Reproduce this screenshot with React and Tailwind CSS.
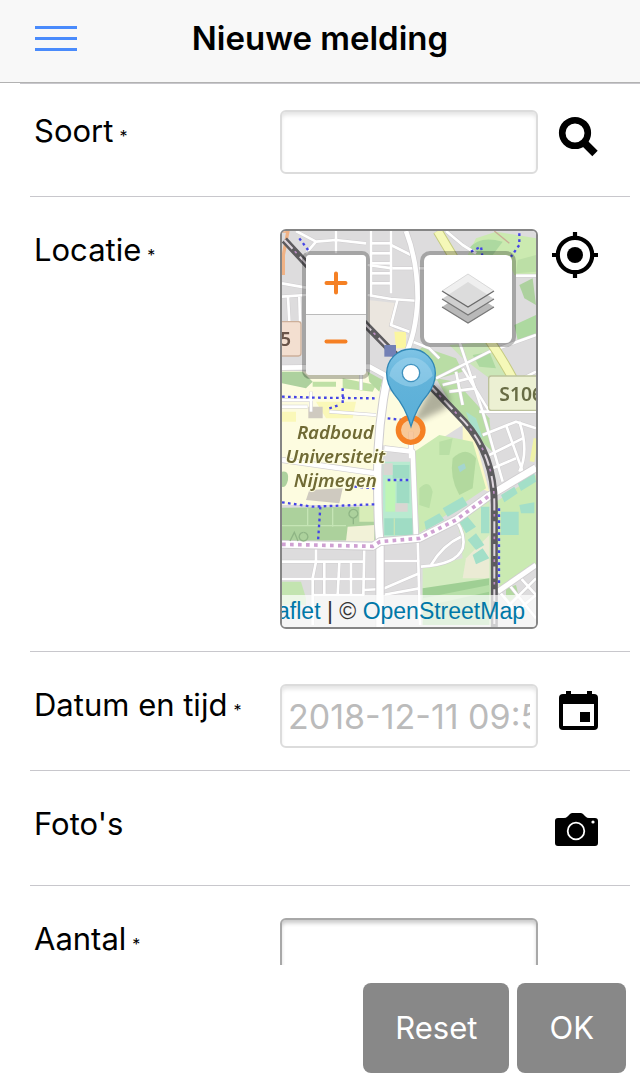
import { useState } from "react";

const ROAD = "#ffffff";
const CASING = "#cfcdcf";

// thin white streets between the houses
const streets = [
  "M18 175 L90 188",
  "M18 215 L90 210",
  "M36 215 L40 290",
  "M70 215 L72 290",
  "M60 18 L120 50 L180 45 L270 55",
  "M120 50 L90 85",
  "M180 18 V85",
  "M285 18 V210",
  "M285 55 H345",
  "M285 85 H345",
  "M285 115 H345",
  "M285 145 H345",
  "M285 175 H345",
  "M345 18 V205",
  "M345 60 L405 90",
  "M350 130 H415",
  "M275 210 L345 222 L430 228",
  "M365 222 L345 300 L400 320",
  "M275 120 L350 130",
  "M430 130 L445 130",
  "M510 18 L560 60 L600 85",
  "M720 152 H780",
  "M550 350 L620 560 L680 770",
  "M410 350 L460 370 L490 400",
  "M480 460 L540 430 L640 380 L780 330",
  "M500 480 L600 455",
  "M520 500 L600 490",
  "M540 440 L560 540",
  "M560 430 L640 560",
  "M700 480 L780 440",
  "M610 560 L780 560",
  "M620 630 L720 590 L780 610",
  "M640 690 L740 640",
  "M690 600 L740 740",
  "M730 590 Q760 680 730 740",
  "M650 730 L720 700",
  "M120 965 V1010 L110 1060 V1200",
  "M18 1010 H265",
  "M18 1062 H310",
  "M145 1012 V1110",
  "M190 1012 L185 1110",
  "M225 1012 V1110",
  "M110 1110 H265",
  "M265 965 L262 1110",
  "M425 940 L432 1200",
  "M315 1008 H430",
  "M262 1095 L320 1092 L430 1045",
  "M320 1110 L430 1090",
  "M435 1025 Q540 1020 560 970 Q570 930 540 885",
  "M465 1020 Q500 960 555 935",
  "M670 1100 L720 1160 L780 1110",
  "M700 1080 L780 1180",
  "M730 1055 L780 1110",
  "M690 1150 L780 1060",
  "M18 525 H110 M18 545 H95",
  "M105 500 V560",
  "M160 560 L300 570",
  "M255 450 V495",
];

const dottedPaths = [
  "M70 40 L100 80",
  "M18 515 L120 518 L300 520",
  "M200 490 V535",
  "M160 550 L190 540",
  "M335 580 L380 585",
  "M585 80 L615 65 L620 100",
  "M730 25 V60 L705 95",
  "M18 832 L110 845 L295 838",
  "M133 845 L126 950",
  "M335 765 H405",
  "M235 785 L295 790",
  "M669 850 V1080",
];

function MapTiles() {
  return (
    <svg
      className="block h-full w-full"
      viewBox="18 18 762 1188"
      preserveAspectRatio="xMidYMid slice"
      aria-hidden="true"
    >
      <defs>
        <linearGradient id="pin" x1="0" y1="0" x2="0" y2="1">
          <stop offset="0" stopColor="#7fc4e6" />
          <stop offset="0.4" stopColor="#62b3da" />
          <stop offset="1" stopColor="#5aafd8" />
        </linearGradient>
        <filter id="soft" x="-50%" y="-50%" width="200%" height="200%">
          <feGaussianBlur stdDeviation="10" />
        </filter>
        <filter id="tile">
          <feGaussianBlur stdDeviation="2" />
        </filter>
      </defs>

      <g filter="url(#tile)">
        <rect width="800" height="1230" fill="#dddcdd" />

        {/* land use */}
        <path d="M275 225 L365 235 L350 310 L395 330 L380 400 L275 300Z" fill="#ebe6df" />
        <path d="M355 320 H390 V370 H360Z" fill="#fbf6a0" />
        <path d="M18 435 L100 440 L250 425 L320 470 L305 840 H18Z" fill="#fdfce0" />
        <path d="M120 530 H240 L230 580 H150Z M18 560 H60 V590 H18Z" fill="#faf8b8" />
        <path d="M18 440 L80 440 L110 470 L90 490 L18 475Z" fill="#add19e" />
        <path d="M110 470 H180 V485 H110Z M200 460 L300 480 L290 500 L200 490Z" fill="#bfe0a5" />
        <path d="M275 440 L320 465 L310 500 L280 470Z" fill="#b5d9a0" />
        <path d="M18 740 Q40 735 36 765 Q30 790 18 785Z" fill="#add19e" />
        <path d="M97 545 H140 V580 H97Z M100 795 L200 790 L190 835 L90 825Z" fill="#cfcac0" />
        <path d="M330 500 L470 490 L560 600 L420 690 L320 660Z" fill="#fdfce0" />
        <path d="M560 600 L600 650 L640 800 L610 790 L560 650Z" fill="#fbf8c8" />
        <path d="M400 400 L440 365 L540 400 L560 440 L490 460 L460 480Z" fill="#b9dda5" />
        <path d="M480 460 L540 470 L640 580 L650 680 L560 600Z" fill="#b9dda5" />
        <path d="M570 560 L600 580 L620 640 L590 620Z" fill="#aae0cb" />
        <path d="M570 100 L600 40 L660 20 L780 40 V155 L715 150 L690 95Z" fill="#cbeab0" />
        <path d="M580 70 Q610 30 680 50 L650 90 L600 88Z" fill="#add9a0" />
        <path d="M725 105 L780 90 V140 L720 145Z" fill="#bcdfa6" />
        <path d="M730 180 L770 160 L780 240 L745 220Z" fill="#add19e" />
        <path d="M520 360 L640 350 L700 460 L640 460 L560 400Z" fill="#cbe6b8" />
        <path d="M590 390 L640 380 L660 430 L610 425Z M715 300 L780 270 V330 L725 345Z" fill="#add9a0" />
        <path d="M415 680 L490 630 L590 650 L630 790 L540 850 L430 925Z" fill="#caeab2" />
        <path d="M530 700 Q570 660 600 700 L590 790 L550 810 Q520 760 530 700Z" fill="#b2d99e" />
        <path d="M430 790 Q460 760 470 800 L460 850 L430 840Z M490 650 L530 640 L520 690 L490 690Z" fill="#b9dfa5" />
        <path d="M545 725 L565 715 L570 730 L552 742Z" fill="#a5d5d0" />
        <path d="M320 710 H410 L415 935 L322 935Z" fill="#b8ead0" />
        <path d="M350 720 H400 V760 H350Z M362 768 H400 V835 H362Z M325 880 H410 V930 H325Z" fill="#9fdcc4" />
        <path d="M328 765 H358 V860 H328Z" fill="#bff5b5" />
        <path d="M322 715 H350 V750 H322Z M358 835 H395 V860 H358Z" fill="#d9d6d2" />
        <path d="M18 848 L300 845 V945 L18 948Z" fill="#acd19c" />
        <path d="M250 845 L300 840 V890 H250Z" fill="#d8edb8" />
        <path d="M215 905 L295 900 V948 H210Z" fill="#f2f2d8" />
        <path d="M440 1030 L560 1000 L545 890 L640 820 L655 1200 H440Z" fill="#d3ecc0" />
        <path d="M570 1000 L640 930 V1060 L560 1060Z" fill="#ebebd4" />
        <path d="M432 945 L535 900 L560 940 L545 1000 L432 1020Z" fill="#dddcdd" />
        <path d="M440 1090 L640 1060 V1200 H440Z" fill="#9fcf94" />
        <path d="M440 1120 L640 1080 V1100 L440 1145Z" fill="#b7dfa8" />
        <path d="M18 1070 H75 L90 1120 V1140 H18Z" fill="#c3e4b0" />
        <path d="M660 830 L780 750 V1030 L670 1095Z" fill="#caeab2" />
        <path d="M690 1090 L720 1080 L730 1120 L690 1130Z" fill="#b3d9a0" />
        <path
          d="M500 850 L560 815 L575 840 L515 875Z M445 890 L490 865 L505 885 L450 915Z M550 890 L575 875 L600 905 L570 925Z M575 945 L600 925 L625 960 L600 975Z M590 990 L620 970 L640 1000 L600 1018Z M615 845 H640 V925 H615Z M675 860 H728 V930 H675Z M675 810 L715 785 L725 805 L685 832Z M725 775 L775 745 L780 770 L735 798Z M730 840 L775 832 V865 H735Z"
          fill="#a3dfc8"
        />

        {/* plots in the park */}
        <path d="M95 850 V900 M170 850 V905 M18 902 H210 M355 880 V930" stroke="#c5e5b5" strokeWidth="4" fill="none" />

        {/* streets */}
        {streets.map((d) => (
          <path key={`c${d}`} d={d} stroke={CASING} strokeWidth="11" fill="none" />
        ))}
        {streets.map((d) => (
          <path key={d} d={d} stroke={ROAD} strokeWidth="8" fill="none" strokeLinejoin="round" />
        ))}

        {/* main roads */}
        <g fill="none" strokeLinejoin="round">
          <path d="M390 18 Q425 110 425 220 Q420 330 385 395 M18 428 L280 425 L335 455 M18 705 L300 745 M325 670 L410 680 L420 940 M405 620 V700" stroke={CASING} strokeWidth="18" />
          <path d="M335 450 Q305 600 305 740 Q305 900 312 950 V1210" stroke={CASING} strokeWidth="28" />
          <path d="M390 18 Q425 110 425 220 Q420 330 385 395 M18 428 L280 425 L335 455 M18 705 L300 745 M325 670 L410 680 L420 940 M405 620 V700" stroke={ROAD} strokeWidth="14" />
          <path d="M335 450 Q305 600 305 740 Q305 900 312 950 V1210" stroke={ROAD} strokeWidth="22" />
          <path d="M385 400 L345 440" stroke={ROAD} strokeWidth="20" />
          <path d="M485 18 L540 110 L640 345 Q690 420 715 470" stroke="#c5cb80" strokeWidth="30" />
          <path d="M485 18 L540 110 L640 345 Q690 420 715 470" stroke="#f5f8b8" strokeWidth="24" />
          <path d="M780 640 L768 710" stroke="#eff2a8" strokeWidth="14" />
          <path d="M665 1100 L780 1020" stroke={CASING} strokeWidth="20" />
          <path d="M665 1100 L780 1020" stroke={ROAD} strokeWidth="15" />
          <path d="M18 958 L290 964 L312 950 L430 940 L540 885 L640 812 L780 728" stroke={CASING} strokeWidth="26" />
          <path d="M18 958 L290 964 L312 950 L430 940 L540 885 L640 812 L780 728" stroke={ROAD} strokeWidth="21" />
          <path d="M18 958 L290 964 L312 950 L430 940 L540 885 L640 812" stroke="#cfa0d2" strokeWidth="11" strokeDasharray="11 13" />
          <path d="M18 18 H36 L22 90 V150" stroke="#f0b285" strokeWidth="10" />
          <path d="M655 18 L700 55" stroke="#c9ad95" strokeWidth="4" />
        </g>

        {/* railway */}
        <g fill="none">
          <path d="M25 45 L90 115 L270 300 L340 372 L470 490 L565 590 Q655 690 655 840 V1210" stroke="#5d5b5f" strokeWidth="21" />
          <path d="M25 45 L90 115 L270 300 L340 372 L470 490 L565 590 Q655 690 655 840 V1210" stroke="#ddd5dd" strokeWidth="6" strokeDasharray="36 32" />
          <path d="M25 45 L90 115 L270 300 L340 372 L470 490 L565 590 Q655 690 655 840 V1210" stroke="#bd8fc4" strokeWidth="5" strokeDasharray="8 60" strokeDashoffset="-46" />
        </g>
        <rect x="325" y="360" width="35" height="35" fill="#7380b5" />

        {dottedPaths.map((d) => (
          <path key={d} d={d} stroke="#4545e6" strokeWidth="7" strokeDasharray="8 10" fill="none" />
        ))}

        {/* tree marks */}
        <g fill="none" stroke="#8fb585" strokeWidth="4">
          <path d="M232 898 V880 Q212 872 222 858 Q232 848 243 858 Q252 872 232 880" />
          <path d="M42 948 L55 922 L66 948 M82 922 a13 13 0 1 0 1 0" />
        </g>

        {/* road numbers */}
        <rect x="-60" y="290" width="135" height="103" rx="8" fill="#f3dfd0" stroke="#cdb09a" strokeWidth="4" />
        <rect x="638" y="453" width="180" height="103" rx="8" fill="#ecf0d3" stroke="#bcc29c" strokeWidth="4" />
        <g fontFamily="'Noto Sans', sans-serif" fontSize="58" fontWeight="600">
          <text x="12" y="362" fill="#6b5548">5</text>
          <text x="670" y="528" fill="#686c45">S106</text>
        </g>

        <g
          fontFamily="'Noto Sans', sans-serif"
          fontSize="56"
          fontStyle="italic"
          fontWeight="600"
          textAnchor="middle"
          fill="#6f6a35"
          stroke="#fdfce0"
          strokeWidth="6"
          paintOrder="stroke"
        >
          <text x="178" y="641">Radboud</text>
          <text x="178" y="713">Universiteit</text>
          <text x="178" y="785">Nijmegen</text>
        </g>
      </g>

      {/* position and marker */}
      <path d="M405 600 L470 480 Q540 500 510 550 Z" fill="#000" opacity="0.3" filter="url(#soft)" />
      <circle cx="404" cy="615" r="37" fill="#f5b77f" fillOpacity="0.75" stroke="#f58024" strokeWidth="16" />
      <path
        d="M405 604 Q388 545 355 508 Q332 478 332 445 A73 73 0 0 1 478 445 Q478 478 455 508 Q422 545 405 604Z"
        fill="url(#pin)"
        stroke="#2f86b5"
        strokeWidth="4"
      />
      <path d="M340 452 A66 66 0 0 1 470 452 Q437 485 405 485 Q373 485 340 452Z" fill="#a3d6ee" opacity="0.55" />
      <circle cx="405" cy="444" r="26" fill="#fff" stroke="#3f92bf" strokeWidth="4" />
    </svg>
  );
}

function LayersIcon() {
  return (
    <svg className="h-[52px] w-[54px]" viewBox="0 0 54 52" aria-hidden="true">
      <path d="M1 34 L27 17 L53 34 L27 50Z" fill="#b9b9b9" />
      <path d="M1 34 L27 50 L53 34" fill="none" stroke="#777" strokeWidth="1.2" />
      <path d="M1 26 L27 9 L53 26 L27 42Z" fill="#cfcfcf" />
      <path d="M1 26 L27 42 L53 26" fill="none" stroke="#777" strokeWidth="1.2" />
      <path d="M1 18 L27 1 L53 18 L27 34Z" fill="#efefef" />
      <path d="M7 22 L27 9 L47 22 L27 34Z" fill="#dcdcdc" />
      <path d="M1 18 L27 34 L53 18" fill="none" stroke="#6a6a6a" strokeWidth="1.4" />
      <path d="M1 18 L27 1 L53 18" fill="none" stroke="#c4c4c4" strokeWidth="0.6" />
    </svg>
  );
}

function SearchIcon() {
  return (
    <svg className="h-full w-full" viewBox="0 0 46 46" fill="none" stroke="#000">
      <circle cx="23" cy="20" r="12.8" strokeWidth="6.6" />
      <path d="M31 28.5 L43 40.5" strokeWidth="7.6" />
    </svg>
  );
}

function LocateIcon() {
  return (
    <svg className="h-full w-full" viewBox="0 0 46 46" fill="none" stroke="#000" strokeWidth="4.2">
      <circle cx="23" cy="23" r="17.2" />
      <circle cx="23" cy="23" r="8" fill="#000" stroke="none" />
      <path d="M23 0 V5 M23 41 V46 M0 23 H5 M41 23 H46" />
    </svg>
  );
}

function CalendarIcon() {
  return (
    <svg className="h-full w-full" viewBox="0 0 46 46">
      <rect x="7" y="7" width="39" height="36" rx="4" />
      <rect x="11" y="17" width="31" height="22" fill="#fff" />
      <path d="M14 4 H19 V9 H14Z M35 4 H40 V9 H35Z M28 25 H38 V35 H28Z" />
    </svg>
  );
}

function CameraIcon() {
  return (
    <svg className="h-full w-full" viewBox="0 0 46 46">
      <path d="M6 12 H12 Q14 12 15.5 10.5 L18 8 Q19 7 20.5 7 H28.5 Q30 7 31 8 L33.5 10.5 Q35 12 37 12 H43 Q46 12 46 15 V37 Q46 40 43 40 H6 Q3 40 3 37 V15 Q3 12 6 12Z" />
      <circle cx="24" cy="25" r="8.3" fill="none" stroke="#fff" strokeWidth="1.8" />
      <circle cx="41" cy="16" r="1.6" fill="#fff" />
    </svg>
  );
}

function Row({ id, buttonId, label, required, icon, iconLabel, first, children }) {
  return (
    <div
      className={`ml-[30px] mr-[10px] flex items-start border-b border-[#c8c7cc] pb-[22px] ${
        first ? "pt-[26px]" : "pt-8"
      }`}
    >
      <label htmlFor={id || buttonId} className="w-[250px] shrink-0 pl-1 text-[31px] leading-[42px]">
        {label}
        {required && <span className="pl-[6px] text-base leading-none">*</span>}
      </label>
      <div className="min-h-[60px] min-w-0 flex-1">{children}</div>
      <div className="w-[92px] shrink-0 pl-[14px] pt-[3px]">
        {icon && (
          <button id={buttonId} type="button" aria-label={iconLabel} className="block size-[46px]">
            {icon}
          </button>
        )}
      </div>
    </div>
  );
}

const field =
  "block h-16 w-full rounded-md border-2 bg-white px-[6px] text-[34px] outline-none placeholder:text-[#bbb]";
const light = "border-[#dcdcdc] shadow-[inset_0_4px_4px_-1px_#e4e4e4]";
const dark = "border-[#a8a8a8] shadow-[inset_0_4px_4px_-1px_#c8c8c8]";

function App() {
  const [soort, setSoort] = useState("");
  const [aantal, setAantal] = useState("");

  function reset() {
    setSoort("");
    setAantal("");
  }

  return (
    <div className="flex h-screen flex-col bg-white font-['Inter','Liberation_Sans',sans-serif] text-black">
      <header className="grid h-[83px] shrink-0 grid-cols-[112px_1fr_112px] items-center border-b border-[#b2b2b2] bg-[#f8f8f8] pb-[6px]">
        <button type="button" aria-label="Menu" className="ml-[35px] flex w-[42px] flex-col gap-2">
          <span className="h-[3px] bg-[#4a8bfc]" />
          <span className="h-[3px] bg-[#4a8bfc]" />
          <span className="h-[3px] bg-[#4a8bfc]" />
        </button>
        <h1 className="text-center text-[33px] font-semibold leading-10">Nieuwe melding</h1>
      </header>

      <main className="min-h-0 flex-1 overflow-y-auto [scrollbar-width:none]">
        <div className="ml-5 border-t border-[#c8c7cc]" />
        <Row id="soort" label="Soort" required first icon={<SearchIcon />} iconLabel="Zoeken">
          <input id="soort" className={`${field} ${light}`} value={soort} onChange={(e) => setSoort(e.target.value)} />
        </Row>

        <Row buttonId="locatie" label="Locatie" required icon={<LocateIcon />} iconLabel="Mijn locatie">
          <div className="relative h-[400px] overflow-hidden rounded-md border-2 border-[#858585]">
            <MapTiles />
            <div className="absolute left-5 top-5 flex w-[68px] flex-col overflow-hidden rounded-lg border-4 border-black/25 bg-clip-padding">
              <button type="button" aria-label="Inzoomen" className="flex h-[60px] items-center justify-center border-b border-[#bbb] bg-white pb-1">
                <svg className="size-6" viewBox="0 0 24 24" stroke="#f58024" strokeWidth="4" strokeLinecap="round">
                  <path d="M12 2.5 V21.5 M2.5 12 H21.5" />
                </svg>
              </button>
              <button type="button" aria-label="Uitzoomen" className="flex h-[60px] items-center justify-center bg-[#f4f4f4] pb-1">
                <svg className="size-6" viewBox="0 0 24 24" stroke="#f58024" strokeWidth="4" strokeLinecap="round">
                  <path d="M2.5 10.5 H21.5" />
                </svg>
              </button>
            </div>
            <button
              type="button"
              aria-label="Kaartlagen"
              className="absolute right-5 top-5 flex size-24 items-center justify-center rounded-[10px] border-4 border-black/25 bg-white bg-clip-padding"
            >
              <LayersIcon />
            </button>
            <div className="absolute inset-x-0 bottom-0 flex h-8 items-center justify-end overflow-hidden whitespace-pre bg-white/70 pr-[11px] font-['Liberation_Sans',Arial,sans-serif] text-[23px] text-[#333]">
              <a href="#leaflet" className="text-[#0078a8]">Leaflet</a>
              <span> | © </span>
              <a href="#osm" className="text-[#0078a8]">OpenStreetMap</a>
            </div>
          </div>
        </Row>

        <Row id="datum" label="Datum en tijd" required icon={<CalendarIcon />} iconLabel="Kies datum">
          <input id="datum" className={`${field} ${light}`} placeholder="2018-12-11 09:55" />
        </Row>

        <Row buttonId="fotos" label="Foto's" icon={<CameraIcon />} iconLabel="Foto maken" />

        <Row id="aantal" label="Aantal" required>
          <input id="aantal" className={`${field} ${dark}`} value={aantal} onChange={(e) => setAantal(e.target.value)} />
        </Row>
      </main>

      <footer className="flex shrink-0 justify-end gap-2 bg-white pb-[18px] pr-[14px] pt-[18px] text-[31px] text-white">
        <button type="button" className="h-[90px] rounded-lg bg-[#888] px-8" onClick={reset}>
          Reset
        </button>
        <button type="button" className="h-[90px] rounded-lg bg-[#888] px-8">
          OK
        </button>
      </footer>
    </div>
  );
}

export default App;
